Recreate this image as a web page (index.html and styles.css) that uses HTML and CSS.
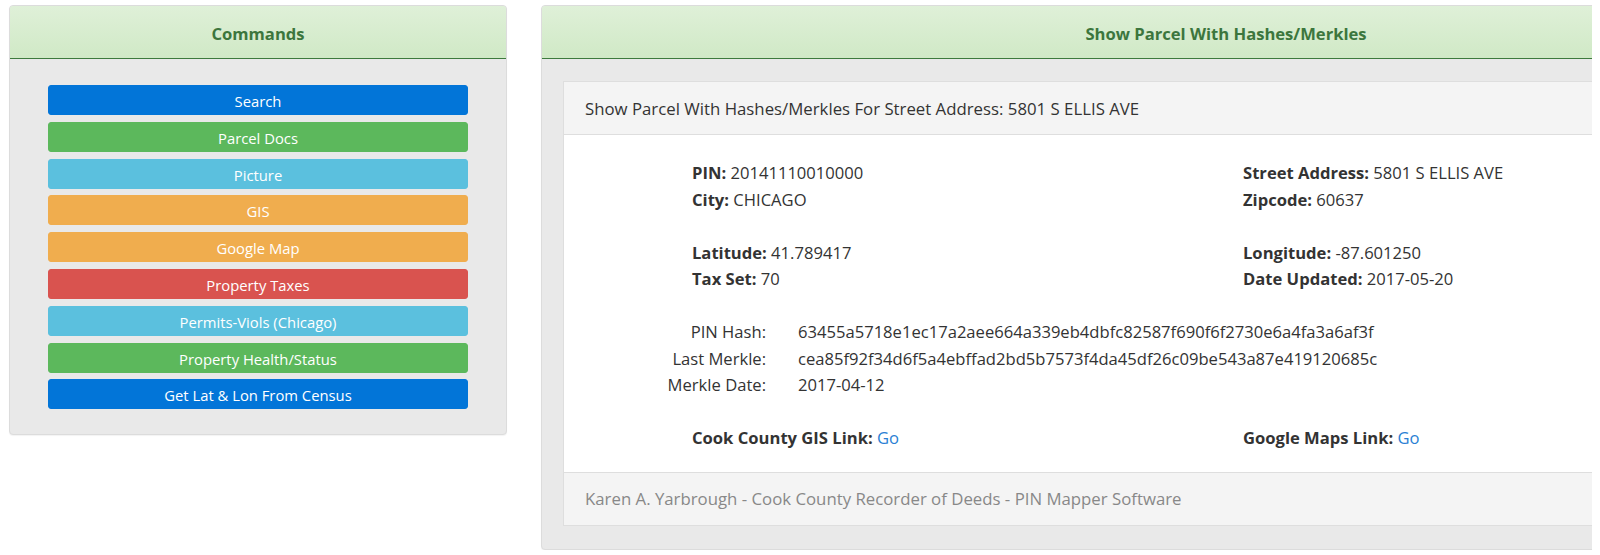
FILE: index.html
```html
<!DOCTYPE html>
<html>
<head>
<meta charset="utf-8">
<link rel="stylesheet" href="styles.css">
</head>
<body>
<div class="page">
  <div class="panel cmd-panel">
    <div class="panel-heading">Commands</div>
    <div class="panel-body cmd-body">
      <a class="btn btn-primary">Search</a>
      <a class="btn btn-success">Parcel Docs</a>
      <a class="btn btn-info">Picture</a>
      <a class="btn btn-warning">GIS</a>
      <a class="btn btn-warning">Google Map</a>
      <a class="btn btn-danger">Property Taxes</a>
      <a class="btn btn-info">Permits-Viols (Chicago)</a>
      <a class="btn btn-success">Property Health/Status</a>
      <a class="btn btn-primary">Get Lat &amp; Lon From Census</a>
    </div>
  </div>
  <div class="panel main-panel">
    <div class="panel-heading">Show Parcel With Hashes/Merkles</div>
    <div class="panel-body main-body">
      <div class="inner">
        <div class="inner-head">Show Parcel With Hashes/Merkles For Street Address: 5801 S ELLIS AVE</div>
        <div class="inner-body">
          <div class="cols">
            <div class="col">
              <div><b>PIN:</b> 20141110010000</div>
              <div><b>City:</b> CHICAGO</div>
            </div>
            <div class="col">
              <div><b>Street Address:</b> 5801 S ELLIS AVE</div>
              <div><b>Zipcode:</b> 60637</div>
            </div>
          </div>
          <div class="cols">
            <div class="col">
              <div><b>Latitude:</b> 41.789417</div>
              <div><b>Tax Set:</b> 70</div>
            </div>
            <div class="col">
              <div><b>Longitude:</b> -87.601250</div>
              <div><b>Date Updated:</b> 2017-05-20</div>
            </div>
          </div>
          <div class="hashes">
            <div class="hl">PIN Hash:</div><div class="hv">63455a5718e1ec17a2aee664a339eb4dbfc82587f690f6f2730e6a4fa3a6af3f</div>
            <div class="hl">Last Merkle:</div><div class="hv">cea85f92f34d6f5a4ebffad2bd5b7573f4da45df26c09be543a87e419120685c</div>
            <div class="hl">Merkle Date:</div><div class="hv">2017-04-12</div>
          </div>
          <div class="cols links">
            <div class="col"><b>Cook County GIS Link:</b> <a class="go">Go</a></div>
            <div class="col"><b>Google Maps Link:</b> <a class="go">Go</a></div>
          </div>
        </div>
        <div class="inner-foot">Karen A. Yarbrough - Cook County Recorder of Deeds - PIN Mapper Software</div>
      </div>
    </div>
  </div>
</div>
</body>
</html>
```

FILE: styles.css
```css
html, body {
  margin: 0;
  padding: 0;
  background: #fff;
}
body {
  font-family: "Open Sans", "Noto Sans", sans-serif;
  color: #333;
}
.page {
  width: 1583px;
  overflow: hidden;
  padding: 5px 0 0 9px;
  display: flex;
  align-items: flex-start;
  gap: 34px;
}
.panel {
  flex: none;
  border: 1px solid #dcdcdc;
  border-radius: 4px;
  background: #e9e9e9;
  box-shadow: 0 1px 1px rgba(0,0,0,0.05);
}
.panel-heading {
  height: 53px;
  padding-top: 2px;
  box-sizing: border-box;
  display: flex;
  align-items: center;
  justify-content: center;
  background: linear-gradient(#dff0d8, #d0e9c6);
  border-bottom: 1px solid #3d7a3d;
  border-radius: 3px 3px 0 0;
  color: #3c763d;
  font-weight: bold;
  font-size: 16.6px;
}
.cmd-panel {
  width: 496px;
}
.cmd-body {
  padding: 26px 38px 25px 38px;
  display: flex;
  flex-direction: column;
  gap: 6.8px;
}
.btn {
  display: flex;
  align-items: center;
  justify-content: center;
  height: 30px;
  padding-top: 2px;
  border-radius: 3px;
  color: #fff;
  font-size: 14.8px;
  border: 1px solid transparent;
  box-sizing: border-box;
}
.btn-primary { background: #0275d8; border-color: #0275d8; }
.btn-success { background: #5cb85c; border-color: #5cb85c; }
.btn-info { background: #5bc0de; border-color: #5bc0de; }
.btn-warning { background: #f0ad4e; border-color: #f0ad4e; }
.btn-danger { background: #d9534f; border-color: #d9534f; }

.main-panel {
  width: 1368px;
}
.main-body {
  padding: 22px 21px 23px 21px;
}
.inner {
  background: #fff;
  border: 1px solid #dedede;
}
.inner-head, .inner-foot {
  height: 52px;
  display: flex;
  align-items: center;
  padding-left: 21px;
  background: #f4f4f4;
  font-size: 16.8px;
}
.inner-head {
  border-bottom: 1px solid #dedede;
}
.inner-foot {
  border-top: 1px solid #dedede;
  color: #888;
}
.inner-body {
  padding: 25px 0 20px 0;
  font-size: 16.6px;
  line-height: 26.5px;
  display: flex;
  flex-direction: column;
  gap: 26.5px;
}
.cols {
  display: grid;
  grid-template-columns: 551px 551px;
  padding-left: 128px;
}
.col b {
  color: #333;
}
.hashes {
  display: grid;
  grid-template-columns: 202px auto;
  column-gap: 32px;
}
.hl {
  text-align: right;
}
.go {
  color: #2a7fd4;
}
```
